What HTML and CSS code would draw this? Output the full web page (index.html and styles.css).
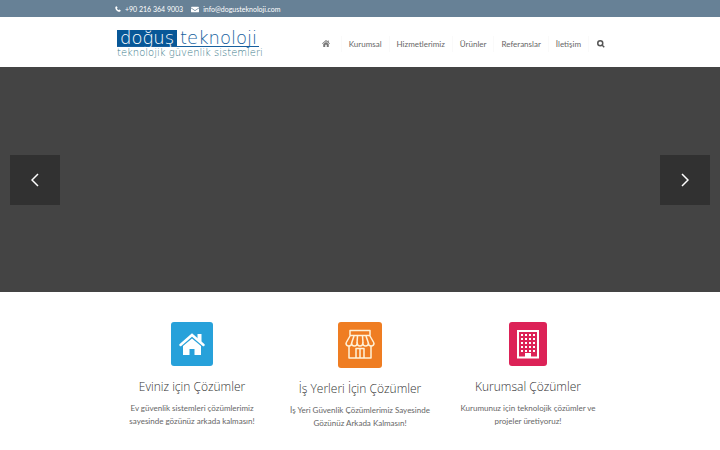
FILE: index.html
```html
<!DOCTYPE html>
<html lang="tr">
<head>
    <meta charset="UTF-8">
    <meta name="viewport" content="width=device-width, initial-scale=1">
    <title>Doğuş Teknoloji</title>
    <link rel="stylesheet" href="styles.css">
</head>
<body>
    <div class="topbar">
        <div class="container topbar-inner">
            <a href="tel:+902163649003">
                <svg class="topbar-icon" viewBox="0 0 12 12"><path d="M3.500.5 1 1.500C-.2 4 1.500 7.200 3.200 8.800S8 12.200 10.500 11L11.500 8.500 8.500 6.800 7.200 8.200C6 7.600 4.400 6 3.800 4.800L5.200 3.500Z"/></svg>
                +90 216 364 9003
            </a>
            <a href="mailto:info@dogusteknoloji.com">
                <svg class="topbar-icon mail" viewBox="0 0 14 12"><path d="M0 2.500Q0 1 1.500 1h11Q14 1 14 2.500L7 7.300Z"/><path d="M0 4 7 8.700 14 4v5.500q0 1.500-1.500 1.500h-11Q0 11 0 9.500Z"/></svg>
                info@dogusteknoloji.com
            </a>
        </div>
    </div>

    <header class="header">
        <div class="container header-inner">
            <a href="#" class="logo">
                <span class="logo-name"><span class="logo-box">doğuş</span><span class="logo-rest">teknoloji</span></span>
                <span class="logo-tagline">teknolojik güvenlik sistemleri</span>
            </a>
            <nav class="menu">
                <a href="#" class="menu-home" aria-label="Anasayfa">
                    <svg viewBox="0 0 16 14"><path d="M8 0 0 7l1 1.200 7-5.700 7 5.700L16 7l-2.500-2.200V1h-2v2Z"/><path d="M8 3.800 2.500 8.200V14h4V9.500h3V14h4V8.200Z"/></svg>
                </a>
                <a href="#">Kurumsal</a>
                <a href="#">Hizmetlerimiz</a>
                <a href="#">Ürünler</a>
                <a href="#">Referanslar</a>
                <a href="#">İletişim</a>
                <button class="menu-search" type="button" aria-label="Ara">
                    <svg viewBox="0 0 16 16"><circle cx="6.500" cy="6.500" r="5"/><path d="m10.500 10.500 4 4"/></svg>
                </button>
            </nav>
        </div>
    </header>

    <section class="slider">
        <button type="button" aria-label="Önceki"><svg viewBox="0 0 8 14"><path d="M7 1 1 7l6 6"/></svg></button>
        <button type="button" aria-label="Sonraki"><svg viewBox="0 0 8 14"><path d="m1 1 6 6-6 6"/></svg></button>
    </section>

    <main class="container services">
        <article class="service">
            <svg class="service-icon" width="42" height="44" viewBox="0 0 42 44">
                <rect width="42" height="44" rx="3" fill="#27a1da"/>
                <path d="m9.500 23 11.500-10 11.500 10" fill="none" stroke="#fff" stroke-width="2.500" stroke-linecap="round"/>
                <path d="M26.500 12h4v8l-4-3.300ZM12 24l9-7.500 9 7.500v9h-6.500V27h-5v6H12Z" fill="#fff"/>
            </svg>
            <h2>Eviniz için Çözümler</h2>
            <p>Ev güvenlik sistemleri çözümlerimiz<br>sayesinde gözünüz arkada kalmasın!</p>
        </article>
        <article class="service">
            <svg class="service-icon" width="44" height="46" viewBox="0 0 44 46">
                <rect width="44" height="46" rx="3" fill="#ef7d22"/>
                <g fill="none" stroke="#fff2d8" stroke-width="1.500" stroke-linejoin="round">
                    <path d="M12 8.500h20v5H12ZM12 14l-4 7M32 14l4 7"/>
                    <path d="M8 21q0 3 2.800 3t2.800-3q0 3 2.800 3t2.800-3q0 3 2.800 3t2.800-3q0 3 2.800 3t2.800-3q0 3 2.800 3T36 21"/>
                    <path d="m16 14-2.400 7m5.900-7-.500 7m5.500-7 .500 7m3-7 2.400 7"/>
                    <path d="M11 24v12h22V24M18 36V26.500h8V36M22 26.500V36"/>
                </g>
            </svg>
            <h2>İş Yerleri İçin Çözümler</h2>
            <p>İş Yeri Güvenlik Çözümlerimiz Sayesinde<br>Gözünüz Arkada Kalmasın!</p>
        </article>
        <article class="service">
            <svg class="service-icon" width="38" height="44" viewBox="0 0 38 44">
                <rect width="38" height="44" rx="3" fill="#dc2257"/>
                <path d="M9 9h20v26.500H9Z" fill="none" stroke="#fff" stroke-width="2"/>
                <path d="M16 31h6v5h-6Z" fill="#fff"/>
                <path d="M12 13h14M12 17h14M12 21h14M12 25h14M12 29h14" fill="none" stroke="#fff" stroke-width="2" stroke-dasharray="2"/>
            </svg>
            <h2>Kurumsal Çözümler</h2>
            <p>Kurumunuz için teknolojik çözümler ve<br>projeler üretiyoruz!</p>
        </article>
    </main>
</body>
</html>
```

FILE: styles.css
```css
* {
    box-sizing: border-box;
}

body {
    margin: 0;
    background: #fff;
    color: #666;
    font-family: Lato, "Open Sans", sans-serif;
    font-size: 8px;
}

a {
    color: inherit;
    text-decoration: none;
}

button {
    border: 0;
    padding: 0;
    background: none;
    cursor: pointer;
}

.container {
    width: 70%;
    margin: 0 auto;
}

/* top bar */
.topbar {
    background: #678196;
    color: #fff;
    font-size: 7px;
}

.topbar-inner {
    display: flex;
    gap: 8px;
    padding: 1px 7px 0;
    line-height: 16px;
}

.topbar-inner a {
    display: flex;
    align-items: center;
    gap: 4px;
}

.topbar-icon {
    width: 6px;
    height: 6px;
    fill: #fff;
}

.topbar-icon.mail {
    width: 8px;
    height: 7px;
}

/* header */
.header-inner {
    display: flex;
    align-items: center;
    justify-content: space-between;
    height: 50px;
    padding: 3px 7px 0 9px;
}

.logo {
    display: flex;
    flex-direction: column;
    align-items: flex-start;
    padding-top: 2px;
    color: #175f9e;
    font-family: "DejaVu Sans", sans-serif;
    font-weight: 200;
}

.logo-name {
    display: flex;
    border-bottom: 1px solid #175f9e;
    font-size: 18px;
    line-height: 16px;
}

.logo-box {
    padding: 0 3px;
    background: #075797;
    color: #fff;
}

.logo-rest {
    padding: 0 2px 0 3px;
}

.logo-tagline {
    color: #3d7c8c;
    font-size: 10px;
    line-height: 12px;
}

.menu {
    display: flex;
    align-items: center;
    line-height: 16px;
}

.menu a {
    padding: 0 7px;
    border-right: 1px solid #fafafa;
}

.menu .menu-home {
    display: flex;
    align-items: center;
    height: 16px;
    padding-right: 11px;
}

.menu-home svg {
    width: 8px;
    height: 7px;
    fill: #777;
}

.menu-search {
    display: flex;
    padding-left: 8px;
}

.menu-search svg {
    width: 8px;
    height: 8px;
    fill: none;
    stroke: #555;
    stroke-width: 3;
}

/* slider */
.slider {
    display: flex;
    align-items: center;
    justify-content: space-between;
    height: 225px;
    padding: 0 10px;
    background: #444;
}

.slider button {
    display: grid;
    place-items: center;
    width: 50px;
    height: 50px;
    background: #313131;
}

.slider svg {
    width: 8px;
    height: 14px;
    fill: none;
    stroke: #fff;
    stroke-width: 1.5;
}

/* services */
.services {
    display: grid;
    grid-template-columns: repeat(3, 1fr);
    padding-top: 30px;
    text-align: center;
}

.service-icon {
    display: block;
    margin: 0 auto;
}

.service h2 {
    margin: 11px 0 5px;
    color: #333;
    font-family: "Open Sans", sans-serif;
    font-size: 12px;
    font-weight: 300;
    line-height: 20px;
}

.service p {
    margin: 0;
    line-height: 13px;
}
```
